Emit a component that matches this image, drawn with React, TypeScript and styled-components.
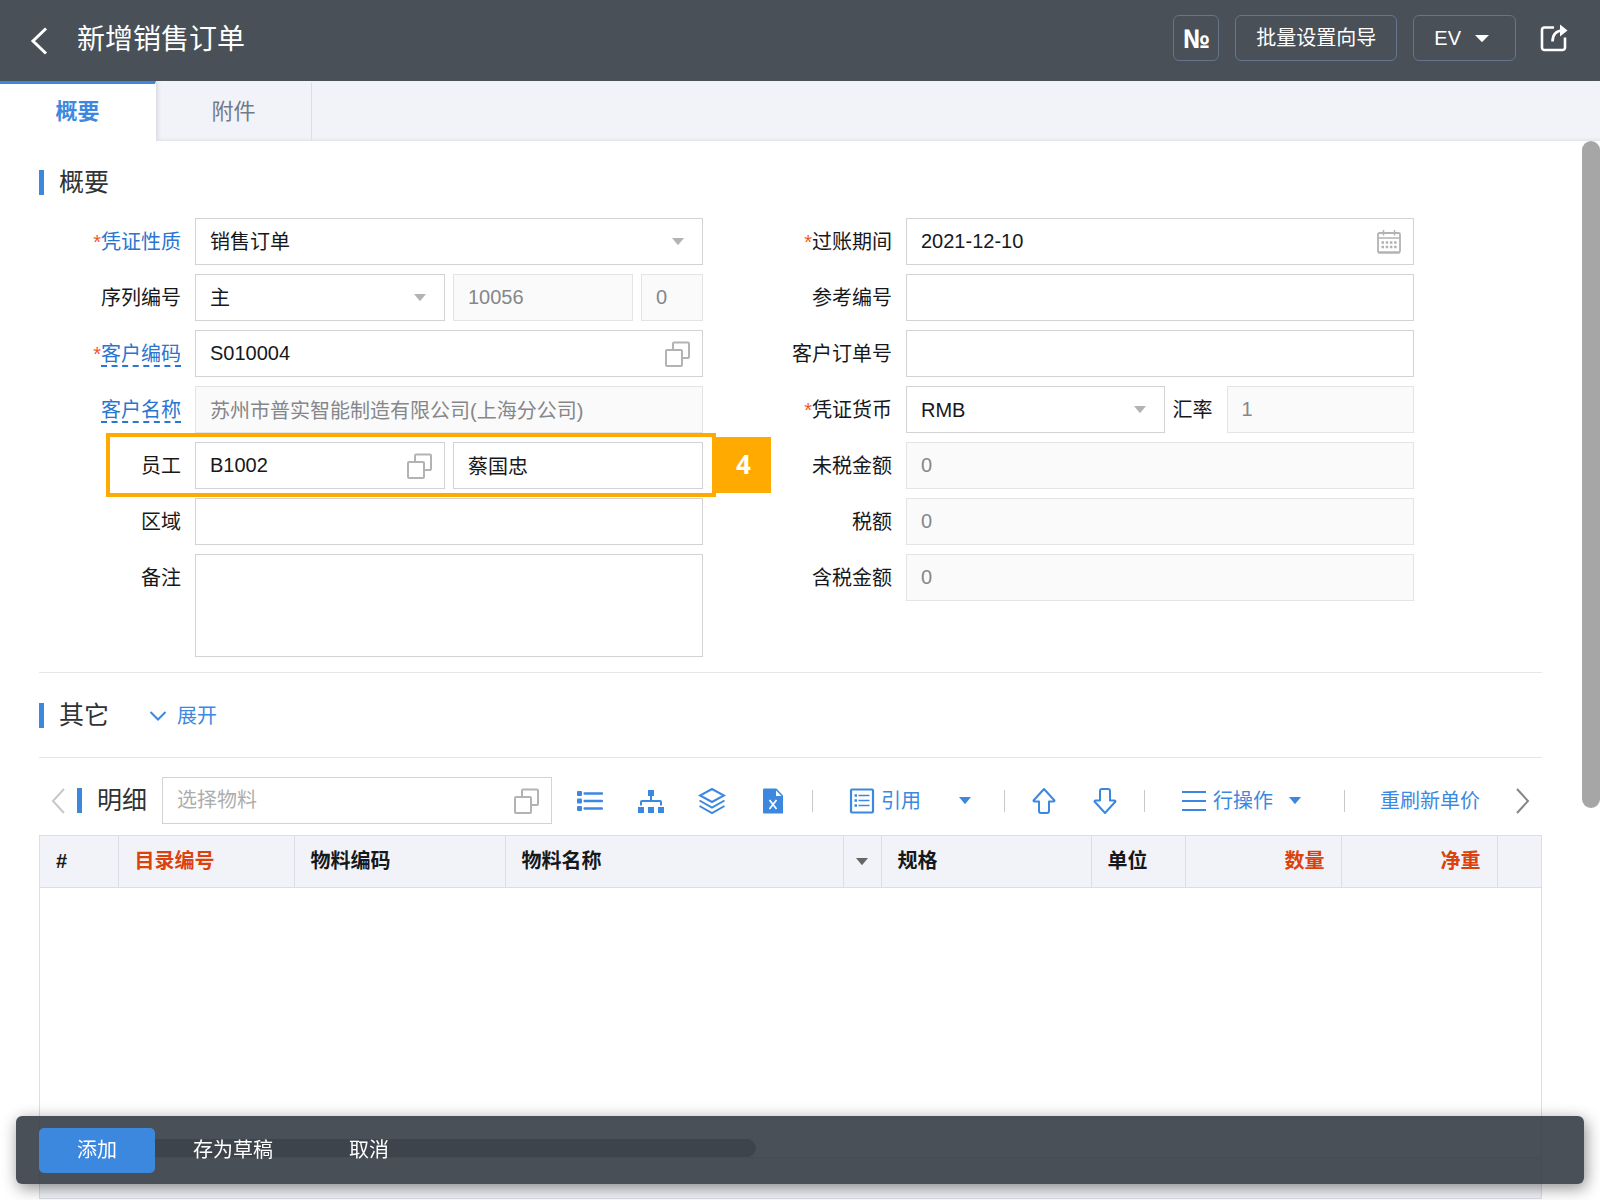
import React, { ReactNode } from "react";
import styled, { createGlobalStyle, css } from "styled-components";

const BLUE = "#3d88df";
const LINK = "#2a75d0";
const SLATE = "#495057";
const LINE = "#dcdee6";
const PANEL = "#f2f3f8";
const MUTED = "#b3b3b3";

const GlobalStyle = createGlobalStyle`
  *, *::before, *::after { box-sizing: border-box; }
  body { margin: 0; background: #fff; }
  body, button, input, select, textarea {
    font-family: "Liberation Sans", "Noto Sans CJK SC", sans-serif;
    font-size: 20px;
    line-height: 28px;
    color: #16181b;
  }
  button { border: 0; padding: 0; background: none; cursor: pointer; }
  svg { display: block; flex: none; }
`;

/* ---------- page frame ---------- */

const Page = styled.div`
  display: flex;
  flex-direction: column;
  height: 100vh;
  overflow: hidden;
`;

const Header = styled.header`
  display: flex;
  align-items: center;
  flex: none;
  padding: 15px 32px 20px 30px;
  background: ${SLATE};
  color: #fff;
`;

const BackButton = styled.button`
  color: #fff;
  padding-top: 6px;
`;

const PageTitle = styled.h1`
  flex: 1;
  margin: 0 0 0 29px;
  padding-top: 3px;
  font-size: 28px;
  line-height: 40px;
  font-weight: 400;
`;

const HeaderActions = styled.div`
  display: flex;
  align-items: center;
  gap: 16px;
`;

const HeaderButton = styled.button`
  display: flex;
  align-items: center;
  justify-content: center;
  gap: 14px;
  height: 46px;
  padding: 0 20px;
  border: 1px solid #64758c;
  border-radius: 6px;
  color: #fff;
`;

const NumeroButton = styled(HeaderButton)`
  width: 46px;
  padding: 0;
  font-family: "Open Sans", "Noto Sans", sans-serif;
  font-size: 26px;
  font-weight: 700;
`;

const UserButton = styled(HeaderButton)`
  padding-right: 26px;
`;

const ShareButton = styled.button`
  margin-left: 8px;
  color: #fff;
`;

const Tabs = styled.nav`
  display: flex;
  flex: none;
  height: 60px;
  background: ${PANEL};
  box-shadow: inset 0 -3px 3px -2px #dddee4;
`;

const Tab = styled.button<{ $active?: boolean }>`
  width: 156px;
  padding-bottom: 2px;
  font-size: 22px;
  border-top: 3px solid transparent;
  border-right: 1px solid ${LINE};
  color: #707a8a;
  ${(p) =>
    p.$active &&
    css`
      background: #fff;
      color: ${BLUE};
      font-weight: 700;
      border-top-color: ${BLUE};
      border-right-color: #fff;
      box-shadow: 2px 0 4px #d9dbe2;
      clip-path: inset(0 -8px 0 0);
    `}
`;

const Viewport = styled.div`
  display: flex;
  flex: 1;
  min-height: 0;
`;

const Content = styled.main`
  display: flex;
  flex-direction: column;
  flex: 1;
  min-width: 0;
  padding: 0 40px 1px 39px;
`;

const ScrollTrack = styled.div`
  width: 18px;
`;

const ScrollThumb = styled.div`
  height: 63%;
  border-radius: 9px;
  background: #a6a6a6;
`;

/* ---------- sections ---------- */

const Section = styled.section`
  padding: 29px 0 15px;
  border-bottom: 1px solid #e6e6e8;
`;

const FoldedSection = styled(Section)`
  display: flex;
  align-items: center;
  gap: 40px;
  padding: 30px 0 29px;
`;

const SectionTitle = styled.h2`
  flex: none;
  margin: 0;
  padding-left: 15px;
  border-left: 5px solid ${BLUE};
  font-size: 25px;
  line-height: 25px;
  font-weight: 400;
  color: #303234;
`;

const ExpandButton = styled.button`
  display: flex;
  align-items: center;
  gap: 10px;
  height: 25px;
  color: ${BLUE};
`;

/* ---------- form ---------- */

const FormGrid = styled.div`
  display: grid;
  grid-template-columns: 664fr 711fr 128fr;
  margin-top: 23px;
`;

const FormColumn = styled.div<{ $label: number }>`
  display: flex;
  flex-direction: column;
  gap: 9px;
  --label-width: ${(p) => p.$label}px;
`;

const FormRow = styled.div`
  position: relative;
  display: flex;
  gap: 14px;
`;

const RowLabel = styled.label<{ $blue?: boolean }>`
  flex: none;
  width: var(--label-width);
  height: 47px;
  line-height: 48px;
  text-align: right;
  color: ${(p) => (p.$blue ? LINK : "inherit")};
`;

const InlineLabel = styled.label`
  flex: none;
  height: 47px;
  margin-right: 6px;
  line-height: 48px;
`;

const Star = styled.span`
  color: #f2572b;
`;

const LabelLink = styled.a`
  color: ${LINK};
  text-decoration: none;
  border-bottom: 2px dashed ${LINK};
`;

const Fields = styled.div`
  display: flex;
  flex: 1;
  gap: 8px;
  min-width: 0;
`;

const FieldBox = styled.div<{ $grow?: number }>`
  position: relative;
  display: flex;
  flex: ${(p) => p.$grow ?? 1} 1 0;
  min-width: 0;
`;

const control = css`
  width: 100%;
  min-width: 0;
  height: 47px;
  margin: 0;
  padding: 0 14px;
  border: 1px solid #d3d3d3;
  border-radius: 0;
  background: #fff;
  outline: none;
`;

const TextInput = styled.input`
  ${control}
  &:read-only {
    background: #fafafa;
    border-color: #e4e4e4;
    color: #85878a;
  }
  &::placeholder {
    color: #adadad;
    opacity: 1;
  }
`;

const SelectInput = styled.select`
  ${control}
  appearance: none;
`;

const TextArea = styled.textarea`
  ${control}
  height: 103px;
  padding: 8px 14px;
  resize: none;
`;

const FieldIcon = styled.span<{ $right: number }>`
  position: absolute;
  right: ${(p) => p.$right}px;
  top: 0;
  bottom: 0;
  display: flex;
  align-items: center;
  color: ${MUTED};
  pointer-events: none;
`;

const Highlight = styled.div`
  position: absolute;
  top: -9px;
  right: -13px;
  bottom: -8px;
  left: 67px;
  border: 4px solid #ffaa00;
  pointer-events: none;
`;

const StepBadge = styled.span`
  position: absolute;
  top: 0;
  bottom: 0;
  left: 100%;
  width: 59px;
  padding: 0 0 3px 4px;
  display: flex;
  align-items: center;
  justify-content: center;
  background: #ffaa00;
  color: #fff;
  font-family: "Open Sans", sans-serif;
  font-size: 26px;
  font-weight: 700;
`;

/* ---------- detail toolbar ---------- */

const Toolbar = styled.div`
  display: flex;
  align-items: center;
  padding: 19px 12px 11px;
`;

const ToolbarTitle = styled(SectionTitle)`
  margin: 0 15px 0 12px;
`;

const MaterialBox = styled.div`
  position: relative;
  flex: 0 1 390px;
  min-width: 0;
  margin-right: 24px;
`;

const ToolGroup = styled.div<{ $gap: number }>`
  display: flex;
  align-items: center;
  gap: ${(p) => p.$gap}px;
`;

const ToolButton = styled.button`
  display: flex;
  align-items: center;
  justify-content: center;
  gap: 5px;
  min-width: 28px;
  height: 28px;
  white-space: nowrap;
  color: ${BLUE};
`;

const Divider = styled.span<{ $before: number; $after: number }>`
  flex: none;
  width: 1px;
  height: 22px;
  margin: 0 ${(p) => p.$after}px 0 ${(p) => p.$before}px;
  background: #c9c9c9;
`;

const PagerButton = styled.button<{ $end?: boolean }>`
  margin-left: ${(p) => (p.$end ? "auto" : "0")};
  color: ${(p) => (p.$end ? "#858585" : "#c8c8c8")};
`;

/* ---------- grid ---------- */

const GridPanel = styled.div`
  display: flex;
  flex-direction: column;
  flex: 1;
  min-height: 0;
  border: 1px solid ${LINE};
`;

const GridTable = styled.table`
  width: 100%;
  flex: none;
  table-layout: fixed;
  border-collapse: collapse;
  background: ${PANEL};
`;

const HeadCell = styled.th<{ $red?: boolean; $end?: boolean }>`
  height: 51px;
  padding: 0 16px;
  border-right: 1px solid ${LINE};
  border-bottom: 1px solid ${LINE};
  text-align: ${(p) => (p.$end ? "right" : "left")};
  font-weight: 700;
  white-space: nowrap;
  color: ${(p) => (p.$red ? "#dc420c" : "#16181b")};
  &:last-child {
    border-right: 0;
  }
`;

const MenuCell = styled(HeadCell)`
  padding: 0;
`;

const ColumnMenu = styled.button`
  display: flex;
  align-items: center;
  justify-content: center;
  width: 100%;
  height: 28px;
  color: #666;
`;

const GridBody = styled.div`
  display: flex;
  flex: 1;
  align-items: flex-end;
`;

const GridThumb = styled.div`
  width: 716px;
  height: 18px;
  border-radius: 9px;
  background: #a6a6a6;
`;

const GridFooter = styled.div`
  height: 41px;
  border-top: 1px solid ${LINE};
  background: ${PANEL};
`;

/* ---------- floating action bar ---------- */

const ActionBar = styled.footer`
  position: fixed;
  right: 16px;
  bottom: 16px;
  left: 16px;
  display: flex;
  align-items: center;
  height: 68px;
  padding: 0 23px;
  border-radius: 6px;
  background: rgba(45, 53, 61, 0.865);
  box-shadow: 2px 4px 16px rgba(0, 0, 0, 0.45);
`;

const ActionButton = styled.button<{ $primary?: boolean }>`
  height: 45px;
  padding: 0 38px;
  border-radius: 5px;
  color: #fff;
  background: ${(p) => (p.$primary ? BLUE : "transparent")};
`;

/* ---------- icons ---------- */

const Caret = ({ w = 12 }: { w?: number }) => (
  <svg width={w} height="7" viewBox="0 0 12 7" preserveAspectRatio="none" fill="currentColor">
    <path d="M0 0h12L6.6 6.6a.8.8 0 0 1-1.2 0z" />
  </svg>
);

const Chevron = ({ w, h, d, s }: { w: number; h: number; d: string; s: number }) => (
  <svg width={w} height={h} fill="none" stroke="currentColor" strokeWidth={s}>
    <path d={d} />
  </svg>
);

const PickIcon = () => (
  <svg width="26" height="26" fill="none" stroke="currentColor" strokeWidth="2">
    <rect x="2" y="9" width="16" height="16" rx="1" />
    <path d="M9 8.500V2.500a1 1 0 0 1 1-1h14a1 1 0 0 1 1 1v13.500a1 1 0 0 1-1 1h-5.500" />
  </svg>
);

const CalendarIcon = () => (
  <svg width="24" height="24" fill="none" stroke="currentColor">
    <rect x="1" y="3" width="22" height="19.500" rx="1.500" strokeWidth="1.800" />
    <path d="M1 22.500h22" strokeWidth="2" />
    <path d="M1 8h22M6.500 0v5.500M17.500 0v5.500" strokeWidth="1.500" />
    <path d="M4.500 12.500h16M4.500 17h16" strokeWidth="2.500" strokeDasharray="2.500 1.700" />
  </svg>
);

const ShareIcon = () => (
  <svg width="28" height="28" fill="none" stroke="currentColor" strokeWidth="2.600">
    <path d="M14 3.500H4.500A2.500 2.500 0 0 0 2 6v17.500A2.500 2.500 0 0 0 4.500 26h18a2.500 2.500 0 0 0 2.500-2.500V13.500" />
    <path d="M12.500 17.500c0-7 3-10.500 10-11" />
    <path d="M20 .5l7.500 6-7.500 6z" fill="currentColor" stroke="none" />
  </svg>
);

const ListIcon = () => (
  <svg width="28" height="24" fill="currentColor">
    {[2, 9.500, 17].map((y) => (
      <g key={y}>
        <rect x="1" y={y} width="5" height="5" rx="1" />
        <rect x="7.500" y={y + 1.300} width="19.500" height="2.400" rx="1" />
      </g>
    ))}
  </svg>
);

const OrgIcon = () => (
  <svg width="28" height="26" fill="currentColor">
    <path d="M11 2h6v6h-6zM1 19h6v6H1zM11 19h6v6h-6zM21 19h6v6h-6z" />
    <path d="M14 8v5M4 17.500V14a1 1 0 0 1 1-1h18a1 1 0 0 1 1 1v3.500" fill="none" stroke="currentColor" strokeWidth="2" />
  </svg>
);

const LayersIcon = () => (
  <svg width="28" height="28" fill="none" stroke="currentColor" strokeWidth="2">
    <path d="M14 2l12 6.500L14 15 2 8.500z" />
    <path d="M1.500 13.500L14 20.500l12.500-7M1.500 19L14 26l12.500-7" />
  </svg>
);

const ExcelIcon = () => (
  <svg width="28" height="28">
    <path d="M5 1.500h12.500l6.500 7V26.500H5A1 1 0 0 1 4 25.500V2.500a1 1 0 0 1 1-1z" fill={BLUE} />
    <path d="M17 3.500v5.500h5.500z" fill="#fff" />
    <path d="M10.500 13l7 9M17.500 13l-7 9" stroke="#fff" strokeWidth="1.700" />
  </svg>
);

const FormIcon = () => (
  <svg width="28" height="28" fill="none" stroke="currentColor">
    <rect x="3" y="2.500" width="22" height="23" rx="1" strokeWidth="2.200" />
    <path d="M10.500 8.500h11M10.500 13.500h11M10.500 18.500h11" strokeWidth="1.700" />
    <path d="M6.500 8.500h2.500M6.500 13.500h2.500M6.500 18.500h2.500" strokeWidth="2.300" />
  </svg>
);

const ArrowIcon = ({ down }: { down?: boolean }) => (
  <svg width="28" height="28" fill="none" stroke="currentColor" strokeWidth="2" strokeLinejoin="round">
    <path
      transform={down ? "rotate(180 14 14)" : undefined}
      d="M14 2L24.500 13.500q0 1-1 1H19v9.500a2 2 0 0 1-2 2h-6a2 2 0 0 1-2-2v-9.500H4.500q-1 0-1-1z"
    />
  </svg>
);

const MenuIcon = () => (
  <svg width="28" height="24" stroke="currentColor" strokeWidth="2.200">
    <path d="M2 3h24M2 12h24M2 21h24" />
  </svg>
);

/* ---------- form pieces ---------- */

interface RowProps {
  id: string;
  label: string;
  required?: boolean;
  blue?: boolean;
  link?: boolean;
  step?: string;
  children: ReactNode;
}

const Row = ({ id, label, required, blue, link, step, children }: RowProps) => (
  <FormRow>
    <RowLabel htmlFor={id} $blue={blue}>
      {required && <Star>*</Star>}
      {link ? <LabelLink href="#">{label}</LabelLink> : label}
    </RowLabel>
    <Fields>{children}</Fields>
    {step && (
      <Highlight>
        <StepBadge>{step}</StepBadge>
      </Highlight>
    )}
  </FormRow>
);

interface FieldProps {
  id: string;
  value?: string;
  grow?: number;
  readOnly?: boolean;
  icon?: ReactNode;
  name?: string;
}

const Field = ({ id, value = "", grow, readOnly, icon, name }: FieldProps) => (
  <FieldBox $grow={grow}>
    <TextInput id={id} aria-label={name} defaultValue={value} readOnly={readOnly} />
    {icon && <FieldIcon $right={13}>{icon}</FieldIcon>}
  </FieldBox>
);

const Select = ({ id, value, grow }: { id: string; value: string; grow?: number }) => (
  <FieldBox $grow={grow}>
    <SelectInput id={id} defaultValue={value}>
      <option>{value}</option>
    </SelectInput>
    <FieldIcon $right={19}>
      <Caret />
    </FieldIcon>
  </FieldBox>
);

const COLUMNS = [78, 176, 211, undefined, 38, 210, 94, 156, 156, 44];

export default function App() {
  return (
    <Page>
      <GlobalStyle />
      <Header>
        <BackButton aria-label="返回">
          <Chevron w={18} h={28} d="M16 1.500L3 14l13 12.500" s={3} />
        </BackButton>
        <PageTitle>新增销售订单</PageTitle>
        <HeaderActions>
          <NumeroButton>№</NumeroButton>
          <HeaderButton>批量设置向导</HeaderButton>
          <UserButton>
            EV
            <Caret w={14} />
          </UserButton>
          <ShareButton aria-label="分享">
            <ShareIcon />
          </ShareButton>
        </HeaderActions>
      </Header>

      <Tabs>
        <Tab $active>概要</Tab>
        <Tab>附件</Tab>
      </Tabs>

      <Viewport>
        <Content>
          <Section>
            <SectionTitle>概要</SectionTitle>
            <FormGrid>
              <FormColumn $label={142}>
                <Row id="nature" label="凭证性质" required blue>
                  <Select id="nature" value="销售订单" />
                </Row>
                <Row id="series" label="序列编号">
                  <Select id="series" value="主" grow={250} />
                  <Field id="serial" value="10056" grow={180} readOnly name="序列号" />
                  <Field id="version" value="0" grow={62} readOnly name="版本" />
                </Row>
                <Row id="customer" label="客户编码" required link>
                  <Field id="customer" value="S010004" icon={<PickIcon />} />
                </Row>
                <Row id="customerName" label="客户名称" link>
                  <Field id="customerName" value="苏州市普实智能制造有限公司(上海分公司)" readOnly />
                </Row>
                <Row id="staff" label="员工" step="4">
                  <Field id="staff" value="B1002" icon={<PickIcon />} />
                  <Field id="staffName" value="蔡国忠" name="员工姓名" />
                </Row>
                <Row id="region" label="区域">
                  <Field id="region" />
                </Row>
                <Row id="remark" label="备注">
                  <TextArea id="remark" />
                </Row>
              </FormColumn>

              <FormColumn $label={189}>
                <Row id="period" label="过账期间" required>
                  <Field id="period" value="2021-12-10" icon={<CalendarIcon />} />
                </Row>
                <Row id="reference" label="参考编号">
                  <Field id="reference" />
                </Row>
                <Row id="customerOrder" label="客户订单号">
                  <Field id="customerOrder" />
                </Row>
                <Row id="currency" label="凭证货币" required>
                  <Select id="currency" value="RMB" grow={258} />
                  <InlineLabel htmlFor="rate">汇率</InlineLabel>
                  <Field id="rate" value="1" grow={187} readOnly />
                </Row>
                <Row id="net" label="未税金额">
                  <Field id="net" value="0" readOnly />
                </Row>
                <Row id="tax" label="税额">
                  <Field id="tax" value="0" readOnly />
                </Row>
                <Row id="gross" label="含税金额">
                  <Field id="gross" value="0" readOnly />
                </Row>
              </FormColumn>
            </FormGrid>
          </Section>

          <FoldedSection>
            <SectionTitle>其它</SectionTitle>
            <ExpandButton>
              <Chevron w={18} h={12} d="M1.500 2L9 9.500 16.500 2" s={2} />
              展开
            </ExpandButton>
          </FoldedSection>

          <Toolbar>
            <PagerButton aria-label="向左">
              <Chevron w={14} h={26} d="M13 1L2 13l11 12" s={2} />
            </PagerButton>
            <ToolbarTitle>明细</ToolbarTitle>
            <MaterialBox>
              <TextInput aria-label="选择物料" placeholder="选择物料" />
              <FieldIcon $right={13}>
                <PickIcon />
              </FieldIcon>
            </MaterialBox>
            <ToolGroup $gap={33}>
              <ToolButton aria-label="列表"><ListIcon /></ToolButton>
              <ToolButton aria-label="结构"><OrgIcon /></ToolButton>
              <ToolButton aria-label="层级"><LayersIcon /></ToolButton>
              <ToolButton aria-label="导出"><ExcelIcon /></ToolButton>
            </ToolGroup>
            <Divider $before={25} $after={35} />
            <ToolGroup $gap={30}>
              <ToolButton><FormIcon />引用</ToolButton>
              <ToolButton aria-label="更多引用"><Caret /></ToolButton>
            </ToolGroup>
            <Divider $before={25} $after={25} />
            <ToolGroup $gap={33}>
              <ToolButton aria-label="上移"><ArrowIcon /></ToolButton>
              <ToolButton aria-label="下移"><ArrowIcon down /></ToolButton>
            </ToolGroup>
            <Divider $before={25} $after={35} />
            <ToolGroup $gap={8}>
              <ToolButton><MenuIcon />行操作</ToolButton>
              <ToolButton aria-label="更多行操作"><Caret /></ToolButton>
            </ToolGroup>
            <Divider $before={35} $after={35} />
            <ToolButton>重刷新单价</ToolButton>
            <PagerButton $end aria-label="向右">
              <Chevron w={14} h={26} d="M1 1l11 12L1 25" s={2} />
            </PagerButton>
          </Toolbar>

          <GridPanel>
            <GridTable>
              <colgroup>
                {COLUMNS.map((width, i) => (
                  <col key={i} style={{ width }} />
                ))}
              </colgroup>
              <thead>
                <tr>
                  <HeadCell>#</HeadCell>
                  <HeadCell $red>目录编号</HeadCell>
                  <HeadCell>物料编码</HeadCell>
                  <HeadCell>物料名称</HeadCell>
                  <MenuCell>
                    <ColumnMenu aria-label="列菜单"><Caret /></ColumnMenu>
                  </MenuCell>
                  <HeadCell>规格</HeadCell>
                  <HeadCell>单位</HeadCell>
                  <HeadCell $red $end>数量</HeadCell>
                  <HeadCell $red $end>净重</HeadCell>
                  <HeadCell />
                </tr>
              </thead>
            </GridTable>
            <GridBody>
              <GridThumb />
            </GridBody>
            <GridFooter />
          </GridPanel>
        </Content>
        <ScrollTrack>
          <ScrollThumb />
        </ScrollTrack>
      </Viewport>

      <ActionBar>
        <ActionButton $primary>添加</ActionButton>
        <ActionButton>存为草稿</ActionButton>
        <ActionButton>取消</ActionButton>
      </ActionBar>
    </Page>
  );
}
